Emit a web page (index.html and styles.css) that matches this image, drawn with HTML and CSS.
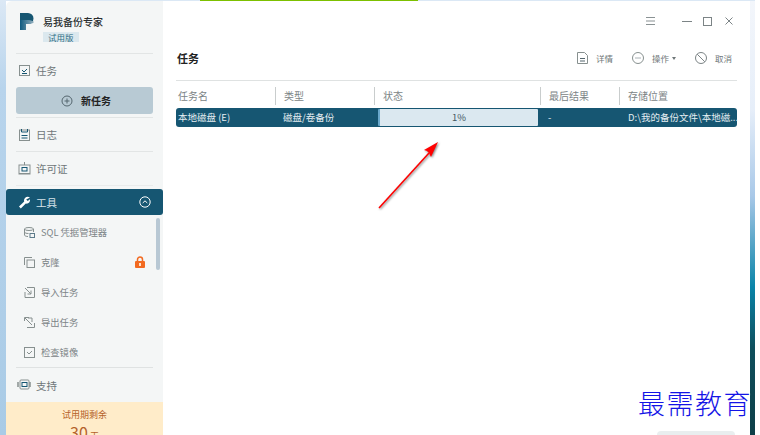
FILE: index.html
```html
<!DOCTYPE html>
<html lang="zh-CN">
<head>
  <meta charset="UTF-8" />
  <title>易我备份专家</title>
  <link rel="stylesheet" href="styles.css">
</head>
<body>

  <div class="desktop">
    <div class="top-strip"><div class="top-green"></div></div>
    <div class="desk-row">
      <div class="edge-left"></div>

      <div class="window">
        <!-- SIDEBAR -->
        <aside class="sidebar">
          <div class="brand">
            <svg class="logo" width="14" height="17" viewBox="0 0 14 17">
              <defs><linearGradient id="lg" x1="0" x2="1"><stop offset="0" stop-color="#0f5a80"/><stop offset="1" stop-color="#9ab4c2"/></linearGradient></defs>
              <path d="M0 0h8a5.500 5.500 0 0 1 0 11H5v-1a3 3 0 0 0-3-3H0z" fill="#165672"/>
              <path d="M0 7h8c3 0 5 1 6 2-1 1.500-3 2-6 2H6v6H0z" fill="url(#lg)"/>
            </svg>
            <div>
              <div class="brand-name">易我备份专家</div>
              <span class="badge">试用版</span>
            </div>
          </div>

          <div class="nav-item nav-task">
            <svg width="11" height="11" viewBox="0 0 11 11"><rect x=".5" y=".5" width="10" height="10" fill="none" stroke="#87908f"/><path d="M3 5l2 2 3-3M3 8.500h5" fill="none" stroke="#165672"/></svg>
            <span>任务</span>
          </div>
          <div class="new-task">
            <svg width="12" height="12" viewBox="0 0 12 12"><circle cx="6" cy="6" r="5" fill="none" stroke="#55666e"/><path d="M3.500 6h5M6 3.500v5" stroke="#55666e"/></svg>
            <b>新任务</b>
          </div>
          <div class="nav-item nav-line">
            <svg width="11" height="12" viewBox="0 0 11 12"><rect x=".5" y="1" width="10" height="10.500" fill="none" stroke="#87908f"/><path d="M2.500 0v3h6V0M2.500 6.500h6M2.500 9h6" fill="none" stroke="#165672"/></svg>
            <span>日志</span>
          </div>
          <div class="nav-item nav-line nav-license">
            <svg width="13" height="13" viewBox="0 0 13 13"><rect x="1" y="3" width="11" height="9" fill="none" stroke="#87908f"/><rect x="4" y="5.500" width="5" height="3.500" fill="none" stroke="#165672"/><path d="M6.500 0v3M1 11.500h11" stroke="#87908f"/></svg>
            <span>许可证</span>
          </div>

          <div class="tools-head">
            <svg width="13" height="13" viewBox="0 0 13 13"><path d="M12 1.500a4 4 0 0 0-5 .5C6 3 5.800 4.500 6.200 5.500L1 10.500 2.800 12.500l5-5c1.200.4 2.500 0 3.400-1 .9-1 1-2.300.6-3.300L9.800 5 8.200 3.500z" fill="#fff"/></svg>
            <span>工具</span>
            <svg class="chev" width="12" height="12" viewBox="0 0 12 12"><circle cx="6" cy="6" r="5.200" fill="none" stroke="#fff"/><path d="M3.700 7l2.300-2.200L8.300 7" fill="none" stroke="#fff"/></svg>
          </div>

          <div class="sub-list">
            <div class="scroll-thumb"></div>
            <div class="sub-item">
              <svg width="11" height="11" viewBox="0 0 11 11"><ellipse cx="5" cy="2" rx="4.500" ry="1.500" fill="none" stroke="#87908f"/><path d="M.5 2v6c0 1 2 1.500 3.500 1.500M.5 5c0 1 2 1.500 4 1.500M9.500 2v3" fill="none" stroke="#87908f"/><rect x="6" y="6.500" width="4.500" height="4" fill="none" stroke="#5d7b8a"/></svg>
              <span>SQL 凭据管理器</span>
            </div>
            <div class="sub-item">
              <svg width="11" height="11" viewBox="0 0 11 11"><path d="M.5 8V.5H8" fill="none" stroke="#87908f"/><rect x="3" y="3" width="7.500" height="7.500" fill="none" stroke="#87908f"/></svg>
              <span>克隆</span>
              <svg class="lock" width="10" height="12" viewBox="0 0 10 12"><path d="M2.500 5V3.500a2.500 2.500 0 0 1 5 0V5" fill="none" stroke="#f26a21" stroke-width="1.500"/><rect y="5" width="10" height="7" rx="1" fill="#f26a21"/><rect x="4" y="7" width="2" height="3" fill="#ffe2c8"/></svg>
            </div>
            <div class="sub-item">
              <svg width="11" height="11" viewBox="0 0 11 11"><path d="M3 .5h7.500V10.500H1V5M1 1l6 6M7 3.500V7H3.500" fill="none" stroke="#87908f"/></svg>
              <span>导入任务</span>
            </div>
            <div class="sub-item">
              <svg width="11" height="11" viewBox="0 0 11 11"><path d="M5 .5H.5M10.500 6v4.500H3M1 1l7 7M.5 4V.5M8 5V1H4" fill="none" stroke="#87908f"/></svg>
              <span>导出任务</span>
            </div>
            <div class="sub-item">
              <svg width="11" height="11" viewBox="0 0 11 11"><rect x=".5" y=".5" width="10" height="10" fill="none" stroke="#87908f"/><path d="M3 5l2 2 3-3" fill="none" stroke="#87908f"/></svg>
              <span>检查镜像</span>
            </div>
          </div>

          <div class="nav-item nav-support">
            <svg width="14" height="12" viewBox="0 0 14 12"><rect x="3" y="1" width="9" height="9" rx="1" fill="none" stroke="#87908f"/><rect x="5" y="3.500" width="5" height="4" fill="none" stroke="#165672"/><path d="M1 3v5M13 3v5" stroke="#87908f" stroke-width="1.500"/></svg>
            <span>支持</span>
          </div>

          <div class="trial">
            <div class="trial-text">试用期剩余</div>
            <div class="trial-days"><b>30</b> 天</div>
          </div>
        </aside>

        <!-- MAIN AREA -->
        <main class="main">
          <div class="titlebar">
            <svg width="9" height="8" viewBox="0 0 9 8"><path d="M0 .5h9M0 4h9M0 7.500h9" stroke="#8a9294"/></svg>
            <svg class="ml-min" width="10" height="10" viewBox="0 0 10 10"><path d="M0 5.500h10" stroke="#7c8486"/></svg>
            <svg class="ml-max" width="9" height="9" viewBox="0 0 9 9"><rect x=".5" y=".5" width="8" height="8" fill="none" stroke="#7c8486"/></svg>
            <svg class="ml-close" width="8" height="8" viewBox="0 0 8 8"><path d="M.5.500l7 7M7.500.500l-7 7" stroke="#7c8486"/></svg>
          </div>

          <div class="toolbar">
            <h1>任务</h1>
            <div class="tool tool-detail">
              <svg width="11" height="12" viewBox="0 0 11 12"><path d="M.5.500h7l3 3v8H.5z" fill="none" stroke="#87908f"/><path d="M3 6.500h5M3 9h5" stroke="#55666e"/></svg>
              <span>详情</span>
            </div>
            <div class="tool tool-op">
              <svg width="12" height="12" viewBox="0 0 12 12"><circle cx="6" cy="6" r="5.500" fill="none" stroke="#87908f"/><path d="M3.500 6h1M5.500 6h1M7.500 6h1" stroke="#55666e"/></svg>
              <span>操作</span><i class="caret"></i>
            </div>
            <div class="tool tool-cancel">
              <svg width="12" height="12" viewBox="0 0 12 12"><circle cx="6" cy="6" r="5.500" fill="none" stroke="#7c8486"/><path d="M2.200 2.200l7.600 7.600" stroke="#7c8486"/></svg>
              <span>取消</span>
            </div>
          </div>

          <div class="table">
            <div class="thead">
              <div>任务名</div>
              <div>类型</div>
              <div>状态</div>
              <div>最后结果</div>
              <div>存储位置</div>
            </div>
            <div class="trow">
              <div>本地磁盘 (E)</div>
              <div>磁盘/卷备份</div>
              <div class="progress">1%</div>
              <div>-</div>
              <div class="path">D:\我的备份文件\本地磁...</div>
            </div>
          </div>

          <div class="bottom-area"><div class="bottom-btn"></div></div>
        </main>
      </div>

      <div class="edge-right"></div>
    </div>
  </div>

  <svg class="arrow" width="70" height="76" viewBox="0 0 70 76">
    <path d="M1 69L51 14" stroke="#f00" stroke-width="1.600"/>
    <path d="M60 3L46 11 49 12 51 14 53 18z" fill="#f00"/>
  </svg>

  <div class="watermark">最需教育</div>

</body>
</html>
```

FILE: styles.css
```css
html, body {
  margin: 0;
  padding: 0;
  height: 435px;
  overflow: hidden;
  background-color: #fff;
}
body {
  font-family: "Noto Sans CJK SC", "Noto Sans", sans-serif;
  color: #7c8486;
  font-size: 10px;
  position: relative;
}
svg {
  display: block;
  flex: none;
}
.desktop {
  height: 435px;
  width: 755px;
  display: flex;
  flex-direction: column;
}
.top-strip {
  height: 1px;
  background-color: #dbe8f5;
  padding-left: 200px;
}
.top-green {
  width: 218px;
  height: 2px;
  background-color: #7cc000;
}
.desk-row {
  flex: 1;
  display: flex;
  min-height: 0;
}
.edge-left {
  width: 6px;
  background: linear-gradient(#dbe8f5, #b8d4ec 20%, #a9cbe6);
}
.edge-right {
  width: 5px;
  background: linear-gradient(#f3f6fb, #e6eef9 25%, #a8c8e8 45%, #0a84a8 66%, #0f4f5c 80%, #0d3f48);
}
.window {
  flex: 1;
  display: flex;
  background-color: #fff;
  border-radius: 6px 6px 0 0;
  overflow: hidden;
}

/* sidebar */
.sidebar {
  width: 157px;
  background-color: #f4f6f6;
  display: flex;
  flex-direction: column;
  flex: none;
}
.sidebar > * {
  flex: none;
}
.brand {
  margin: 0 10px;
  height: 53px;
  padding: 12px 0 0 4px;
  box-sizing: border-box;
  display: flex;
  gap: 9px;
  border-bottom: 1px solid #e2e5e5;
}
.brand-name {
  color: #2a2e30;
  font-size: 10px;
  line-height: 15px;
  margin-top: 1px;
  font-weight: 500;
}
.badge {
  display: block;
  width: fit-content;
  background-color: #dbe8ee;
  color: #2f6f86;
  font-size: 8.500px;
  line-height: 10px;
  padding: 0 5px;
  margin-top: 3px;
}
.nav-item {
  display: flex;
  align-items: center;
  gap: 6px;
  padding-left: 13px;
  font-size: 10.500px;
  color: #6f7779;
}
.nav-task {
  height: 33px;
}
.new-task {
  margin: 0 10px;
  height: 27px;
  background-color: #b8cad4;
  border-radius: 3px;
  display: flex;
  align-items: center;
  padding-left: 45px;
  gap: 8px;
  color: #222;
  font-size: 10px;
}
.nav-line {
  height: 33px;
  margin: 0 10px;
  padding-left: 3px;
  border-top: 1px solid #e2e5e5;
}
.new-task + .nav-line {
  margin-top: 3px;
}
.nav-line + .nav-line {
  border-bottom: 1px solid #e9ebeb;
}
.nav-license {
  padding-left: 2px;
  gap: 5px;
}
.tools-head {
  margin-top: 3px;
  height: 26px;
  background-color: #165672;
  border-radius: 3px;
  display: flex;
  align-items: center;
  padding: 0 12px;
  gap: 5px;
  color: #d8e4ea;
  font-size: 10.500px;
}
.chev {
  margin-left: auto;
}
.sub-list {
  position: relative;
  padding-top: 2px;
  height: 150px;
}
.scroll-thumb {
  position: absolute;
  right: 3px;
  top: 3px;
  width: 4px;
  height: 52px;
  border-radius: 2px;
  background-color: #b8c8d4;
}
.sub-item {
  height: 30px;
  display: flex;
  align-items: center;
  gap: 6px;
  padding-left: 18px;
  font-size: 9.300px;
  color: #7c8486;
}
.lock {
  margin-left: auto;
  margin-right: 18px;
}
.nav-support {
  margin: 0 10px;
  padding-left: 1px;
  gap: 5px;
  height: 34px;
  border-top: 1px solid #dfe2e2;
}
.trial {
  background-color: #ffecc9;
  text-align: center;
  color: #b5622a;
  padding-top: 6px;
  height: 40px;
}
.trial-text {
  font-size: 9px;
  line-height: 13px;
}
.trial-days {
  line-height: 20px;
  margin-top: 1px;
  font-size: 9px;
}
.trial-days b {
  font-size: 16px;
  font-weight: 400;
}

/* main area */
.main {
  flex: 1;
  display: flex;
  flex-direction: column;
  padding: 0 13px;
  min-width: 0;
  position: relative;
}
.titlebar {
  height: 40px;
  display: flex;
  align-items: center;
  padding-left: 470px;
  box-sizing: border-box;
}
.ml-min {
  margin-left: 27px;
}
.ml-max {
  margin-left: 11px;
}
.ml-close {
  margin-left: 13px;
}
.toolbar {
  height: 34px;
  padding: 0 0 5px 1px;
  display: flex;
  align-items: center;
  border-bottom: 1px solid #dfe2e2;
  font-size: 8.500px;
}
h1 {
  margin: 0;
  font-size: 11px;
  font-weight: 700;
  color: #222;
  flex: 1;
}
.tool {
  display: flex;
  align-items: center;
  gap: 8px;
  color: #6f7779;
}
.tool-op {
  margin-left: 19px;
}
.tool-cancel {
  margin-left: 19px;
  margin-right: 5px;
}
.caret {
  width: 0;
  height: 0;
  border-left: 2.500px solid transparent;
  border-right: 2.500px solid transparent;
  border-top: 3px solid #6f7779;
  margin-left: -5px;
}
.table {
  font-size: 10px;
}
.thead, .trow {
  display: grid;
  grid-template-columns: 99px 99px 166px 79px 118px;
  align-items: center;
}
.thead {
  height: 18px;
  margin-top: 6px;
  margin-bottom: 3px;
  color: #7c8486;
}
.thead div {
  border-left: 1px solid #c9cdcd;
  padding-left: 8px;
  line-height: 18px;
}
.thead div:first-child {
  border-left: none;
  padding-left: 2px;
}
.trow {
  height: 19px;
  background-color: #165672;
  border-radius: 3px;
  color: #e6eef2;
  font-size: 9.500px;
  line-height: 17px;
}
.trow > div {
  padding-left: 8px;
  min-width: 0;
  white-space: nowrap;
}
.trow > div:first-child {
  padding-left: 2px;
}
.trow > .progress {
  margin: 0 2px 0 4px;
  padding: 0;
  height: 17px;
  background-color: #dbe8f0;
  border-left: 2px solid #6aa8cc;
  border-radius: 1px;
  color: #44565e;
  text-align: center;
}
.trow > .path {
  padding-left: 9px;
}
.bottom-area {
  flex: 1;
  display: flex;
  justify-content: flex-end;
  align-items: flex-end;
}
.bottom-btn {
  width: 78px;
  height: 4px;
  margin-right: 2px;
  background-color: #e9eeef;
  border-radius: 6px 6px 0 0;
}

/* things drawn over the window */
.arrow {
  position: absolute;
  left: 378px;
  top: 139px;
  filter: drop-shadow(1px 1px 1px rgba(0, 0, 0, 0.5));
}
.watermark {
  position: absolute;
  left: 638px;
  top: 385px;
  font-size: 27px;
  font-weight: 300;
  line-height: 36px;
  letter-spacing: 1.500px;
  color: #1414e6;
  text-shadow: 0 0 2px #fff, 0 0 2px #fff;
  white-space: nowrap;
}
```
